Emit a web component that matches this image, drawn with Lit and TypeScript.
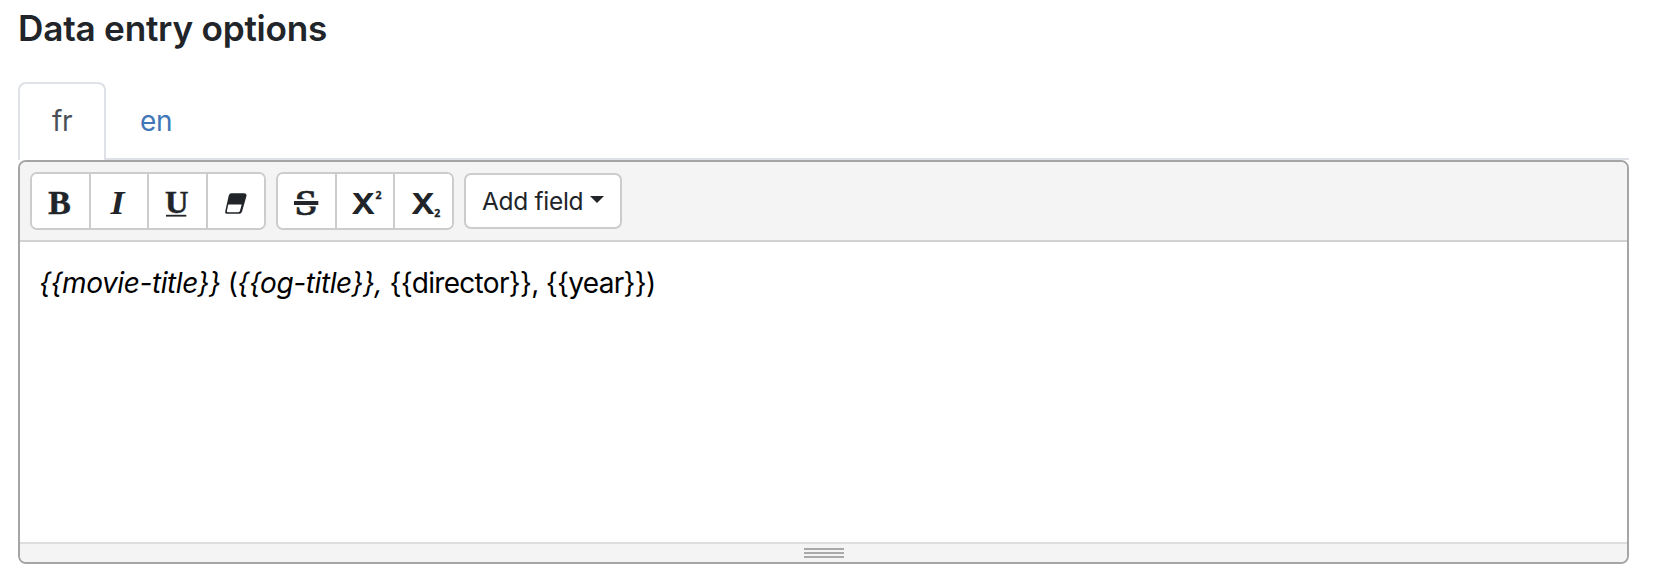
import { LitElement, html, svg, css } from "lit";
import { customElement, state } from "lit/decorators.js";

const glyph = (cls: string, size: number, x: number, w: number, y: number, s: string) =>
  svg`<text class=${cls} x=${x} y=${y} font-size=${size} textLength=${w} lengthAdjust="spacingAndGlyphs">${s}</text>`;

const icons = {
  bold: svg`${glyph("serif heavy", 33, 18.3, 22.5, 42.2, "B")}`,
  italic: svg`${glyph("serif it", 34, 21.5, 14, 42.4, "I")}`,
  underline: svg`${glyph("serif heavy", 31, 17.9, 23.5, 40.8, "U")}<rect x="19" y="42.8" width="20.3" height="1.8"/>`,
  eraser: svg`<path fill-rule="evenodd" d="M25 21.3H38Q41 21.3 40.4 24.3L36.2 38.9Q35.4 41.8 32.5 41.8H21.5Q18.6 41.8 19.3 38.9L22.7 23.8Q23.3 21.3 25 21.3ZM22.3 32.6L20.9 38.9Q20.6 40.3 22 40.3H32Q33.5 40.3 33.9 38.9L35.7 32.6Z"/>`,
  strike: svg`${glyph("serif heavy", 35, 19, 22, 42.8, "S")}<rect class="cut" x="17" y="27.2" width="26" height="7.2"/><rect x="18" y="29" width="24.3" height="4"/>`,
  superscript: svg`${glyph("slab", 32, 17, 22.5, 42, "X")}${glyph("sans", 10, 40.6, 6, 26.6, "2")}`,
  subscript: svg`${glyph("slab", 32, 18.8, 22.5, 42, "X")}${glyph("sans", 10, 41.2, 6, 45.2, "2")}`,
};

@customElement("app-root")
export class AppRoot extends LitElement {
  @state() private lang = "fr";

  static styles = css`
    :host { display: block; box-sizing: border-box; height: 578px; padding: 0 27px 0 18px; background: #fff; color: #212529; font-family: Inter, sans-serif; overflow: hidden; }
    * { box-sizing: border-box; }
    h2 { margin: 0; height: 82px; padding-top: 7px; font-size: 35.2px; line-height: 42px; font-weight: 560; letter-spacing: -0.24px; white-space: nowrap; }
    .tabs { display: flex; height: 78px; box-shadow: inset 0 -2px #dee2e6; }
    .tab { height: 78px; padding: 0 32px 2px; border: 2px solid transparent; border-bottom: 0; font: inherit; font-size: 28px; line-height: 72px; letter-spacing: -0.4px; color: #3f76b8; background: none; border-radius: 8px 8px 0 0; }
    .tab.active { width: 88px; padding: 0 0 2px; text-align: center; color: #495057; background: #fff; border-color: #dee2e6; }
    .editor { display: flex; flex-direction: column; height: 404px; border: 2px solid #a5a5a5; border-radius: 8px; overflow: hidden; }
    .toolbar { display: flex; align-items: center; gap: 10px; height: 80px; padding: 0 10px; background: #f4f4f4; border-bottom: 2px solid #d2d2d2; }
    .group { display: flex; height: 58px; border: 2px solid #ccc; border-radius: 7px; background: #fff; overflow: hidden; }
    .tool { flex: 1 1 0; padding: 0; border: 0; background: #fff; }
    .tool + .tool { border-left: 2px solid #ccc; }
    .four { width: 236px; }
    .three { width: 178px; }
    .tool svg { display: block; width: 56px; height: 54px; fill: #212529; }
    .serif { font-family: "Liberation Serif", serif; font-weight: 700; }
    .it { font-style: italic; }
    .heavy { stroke: #212529; stroke-width: 0.5px; }
    .slab { font-family: "Liberation Mono", monospace; font-weight: 700; }
    .sans { font-family: "Open Sans", sans-serif; font-weight: 700; stroke: #212529; stroke-width: 0.3px; }
    .cut { fill: #fff; }
    .field { display: flex; align-items: center; width: 158px; height: 56px; padding: 0 0 0 16px; border: 2px solid #ccc; border-radius: 7px; background: #fff; color: #212529; font: 400 24.5px Inter, sans-serif; letter-spacing: -0.3px; white-space: nowrap; }
    .caret { margin: -3px 0 0 7px; border: 7px solid transparent; border-top-color: #212529; border-bottom: 0; }
    .content { flex: 1; padding: 19px; color: #000; font-size: 28px; font-weight: 430; line-height: 44px; letter-spacing: -0.69px; white-space: nowrap; }
    .content i { letter-spacing: -0.42px; }
    .status { display: flex; flex-direction: column; align-items: center; gap: 2px; height: 20px; padding-top: 4px; background: #f4f4f4; border-top: 2px solid #ddd; }
    .grip { width: 40px; height: 2px; background: #a9a9a9; }
  `;

  private tools(cls: string, names: (keyof typeof icons)[]) {
    return html`<div class="group ${cls}">${names.map(
      (n) => html`<button class="tool" aria-label=${n}><svg viewBox="2 2 56 54">${icons[n]}</svg></button>`
    )}</div>`;
  }

  render() {
    return html`
      <h2>Data entry options</h2>
      <nav class="tabs">${["fr", "en"].map(
        (l) => html`<button class="tab ${l === this.lang ? "active" : ""}" @click=${() => (this.lang = l)}>${l}</button>`
      )}</nav>
      <section class="editor">
        <div class="toolbar">
          ${this.tools("four", ["bold", "italic", "underline", "eraser"])}
          ${this.tools("three", ["strike", "superscript", "subscript"])}
          <button class="field">Add field<span class="caret"></span></button>
        </div>
        <div class="content"><i>{{movie-title}}</i> (<i>{{og-title}}, </i>{{director}}, {{year}})</div>
        <div class="status"><div class="grip"></div><div class="grip"></div><div class="grip"></div></div>
      </section>`;
  }
}
